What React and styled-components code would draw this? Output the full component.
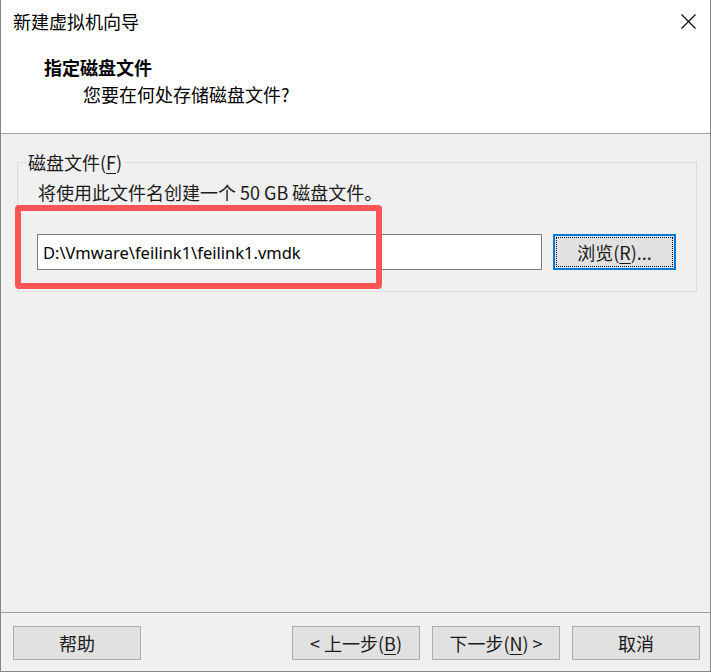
import styled, { createGlobalStyle } from "styled-components";

const GlobalStyle = createGlobalStyle`
  html, body {
    margin: 0;
    padding: 0;
    background: #ffffff;
  }
  * {
    box-sizing: border-box;
  }
`;

const cjk = `"Noto Sans CJK SC", "Noto Sans", sans-serif`;

export default function App() {
  return (
    <Window>
      <GlobalStyle />
      <TitleBar>
        <Title>新建虚拟机向导</Title>
        <CloseButton aria-label="关闭">
          <svg width="15" height="15" viewBox="0 0 15 15">
            <path d="M0.5 0.5 L14.5 14.5 M14.5 0.5 L0.5 14.5" stroke="#000" strokeWidth="1.1" fill="none" />
          </svg>
        </CloseButton>
      </TitleBar>
      <Header>
        <Heading>指定磁盘文件</Heading>
        <SubHeading>您要在何处存储磁盘文件?</SubHeading>
      </Header>
      <Body>
        <Group>
          <Legend>
            磁盘文件(<u>F</u>)
          </Legend>
          <Hint>将使用此文件名创建一个 50 GB 磁盘文件。</Hint>
          <FileRow>
            <Highlight />
            <PathInput defaultValue="D:\Vmware\feilink1\feilink1.vmdk" />
            <BrowseButton $focused>
              浏览(<u>R</u>)...
            </BrowseButton>
          </FileRow>
        </Group>
      </Body>
      <Footer>
        <WizardButton>帮助</WizardButton>
        <Spacer />
        <NavGroup>
          <WizardButton>
            &lt; 上一步(<u>B</u>)
          </WizardButton>
          <WizardButton>
            下一步(<u>N</u>) &gt;
          </WizardButton>
          <WizardButton>取消</WizardButton>
        </NavGroup>
      </Footer>
    </Window>
  );
}

const Window = styled.div`
  width: 711px;
  height: 672px;
  display: flex;
  flex-direction: column;
  border: 1px solid #868686;
  border-top: none;
  font-family: ${cjk};
  color: #000;
`;

const TitleBar = styled.div`
  height: 42px;
  display: flex;
  align-items: center;
  justify-content: space-between;
  padding: 0 14px 0 12px;
  background: #fff;
`;

const Title = styled.div`
  font-size: 18px;
  line-height: 24px;
`;

const CloseButton = styled.div`
  width: 15px;
  height: 15px;
  display: flex;
`;

const Header = styled.div`
  height: 92px;
  background: #fff;
  border-bottom: 1px solid #a0a0a0;
  padding: 13px 0 0 43px;
`;

const Heading = styled.div`
  font-size: 18px;
  font-weight: 700;
  line-height: 24px;
`;

const SubHeading = styled.div`
  font-size: 18px;
  line-height: 24px;
  margin-top: 3px;
  padding-left: 39px;
`;

const Body = styled.div`
  flex: 1;
  background: #f0f0f0;
  padding: 16px 13px 0 16px;
`;

const Group = styled.fieldset`
  margin: 0;
  width: 680px;
  border: 1px solid #dcdcdc;
  padding: 0 20px 21px 20px;
  min-width: 0;
`;

const Legend = styled.legend`
  font-size: 18px;
  line-height: 24px;
  padding: 0 2px;
  margin-left: -12px;
  color: #1a1a1a;

  u {
    text-underline-offset: 3px;
  }
`;

const Hint = styled.div`
  font-size: 18px;
  line-height: 24px;
  margin-top: 6px;
  color: #1a1a1a;
`;

const FileRow = styled.div`
  position: relative;
  display: flex;
  align-items: center;
  gap: 11px;
  margin-top: 30px;
  margin-left: -1px;
`;

const Highlight = styled.div`
  position: absolute;
  left: -22px;
  top: -29px;
  width: 367px;
  height: 84px;
  border: 6px solid #fd5454;
  border-radius: 4px;
  pointer-events: none;
`;

const PathInput = styled.input`
  width: 505px;
  height: 36px;
  border: 1px solid #7a7a7a;
  background: #fff;
  padding: 0 5px;
  font-family: "Noto Sans", "Liberation Sans", sans-serif;
  font-size: 16.5px;
  color: #000;
  outline: none;
`;

const BaseButton = styled.button`
  height: 34px;
  width: 128px;
  background: #e1e1e1;
  border: 1px solid #adadad;
  font-family: ${cjk};
  font-size: 18px;
  color: #1a1a1a;
  padding: 0;
  cursor: pointer;

  u {
    text-underline-offset: 3px;
  }
`;

const BrowseButton = styled(BaseButton)`
  width: 123px;
  height: 36px;
  border: ${(p) => (p.$focused ? "2px solid #0078d7" : "1px solid #adadad")};
  outline: ${(p) => (p.$focused ? "1px dotted #000" : "none")};
  outline-offset: -4px;
`;

const Footer = styled.div`
  height: 59px;
  border-top: 1px solid #a0a0a0;
  background: #f0f0f0;
  display: flex;
  align-items: flex-start;
  padding: 13px 10px 0 12px;
`;

const Spacer = styled.div`
  flex: 1;
`;

const NavGroup = styled.div`
  display: flex;
  gap: 12px;
`;

const WizardButton = styled(BaseButton)``;
